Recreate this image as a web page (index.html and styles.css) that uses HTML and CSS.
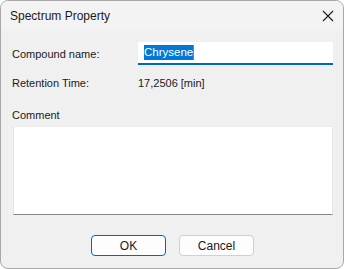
FILE: index.html
```html
<!DOCTYPE html>
<html lang="en">
<head>
  <meta charset="UTF-8" />
  <title>Spectrum Property</title>
  <link rel="stylesheet" href="styles.css">
</head>
<body>
  <div class="window">
    <div class="titlebar">
      <span class="title">Spectrum Property</span>
      <svg class="close" width="12" height="12" viewBox="0 0 12 12">
        <path d="M1 1 L11 11 M11 1 L1 11" stroke="#1a1a1a" stroke-width="1.1" fill="none"/>
      </svg>
    </div>

    <div class="content">
      <div class="row">
        <span class="label">Compound name:</span>
        <div class="input"><span class="selected">Chrysene</span><span class="caret"></span></div>
      </div>
      <div class="row info">
        <span class="label">Retention Time:</span>
        <span class="value">17,2506 [min]</span>
      </div>

      <div class="comment-label">Comment</div>
      <div class="textarea"></div>

      <div class="buttons">
        <button class="btn default">OK</button>
        <button class="btn">Cancel</button>
      </div>
    </div>
  </div>
</body>
</html>
```

FILE: styles.css
```css
html, body {
  margin: 0;
  padding: 0;
  background: #ffffff;
}

body {
  font-family: "Liberation Sans", Arial, sans-serif;
  font-size: 11px;
  color: #1a1a1a;
}

.window {
  width: 344px;
  height: 269px;
  box-sizing: border-box;
  border: 1px solid #a8a8a8;
  border-radius: 8px;
  overflow: hidden;
  background: #f0f0f0;
  display: flex;
  flex-direction: column;
}

.titlebar {
  height: 30px;
  background: #f3f3f3;
  display: flex;
  align-items: center;
  justify-content: space-between;
  padding: 0 9px 0 9px;
  flex-shrink: 0;
}

.title {
  font-size: 12px;
  color: #1a1a1a;
  margin-top: -1px;
}

.close {
  display: block;
}

.content {
  padding: 11px 10px 0 11px;
  display: flex;
  flex-direction: column;
}

.row {
  display: flex;
  align-items: center;
  height: 23px;
}

.row .label {
  width: 126px;
  flex-shrink: 0;
}

.input {
  flex: 1;
  height: 21px;
  background: #ffffff;
  border-bottom: 2px solid #0067c0;
  display: flex;
  align-items: center;
  padding-left: 6px;
}

.selected {
  background: #0078d7;
  color: #ffffff;
  font-size: 11.5px;
  line-height: 15px;
}

.caret {
  width: 1px;
  height: 15px;
  background: #f7630c;
}

.row.info {
  margin-top: 10px;
  height: 16px;
}

.comment-label {
  margin-top: 16px;
  line-height: 16px;
}

.textarea {
  margin-top: 3px;
  margin-left: 1px;
  height: 87px;
  background: #ffffff;
  border: 1px solid #e5e5e5;
  border-bottom: 1px solid #868686;
  border-top-color: #ececec;
}

.buttons {
  display: flex;
  justify-content: center;
  gap: 13px;
  margin-top: 20px;
}

.btn {
  width: 75px;
  height: 21px;
  box-sizing: border-box;
  font-family: inherit;
  font-size: 12px;
  color: #1a1a1a;
  background: #fdfdfd;
  border: 1px solid #d0d0d0;
  border-radius: 4px;
  padding: 0;
}

.btn.default {
  border-color: #0067c0;
}
```
